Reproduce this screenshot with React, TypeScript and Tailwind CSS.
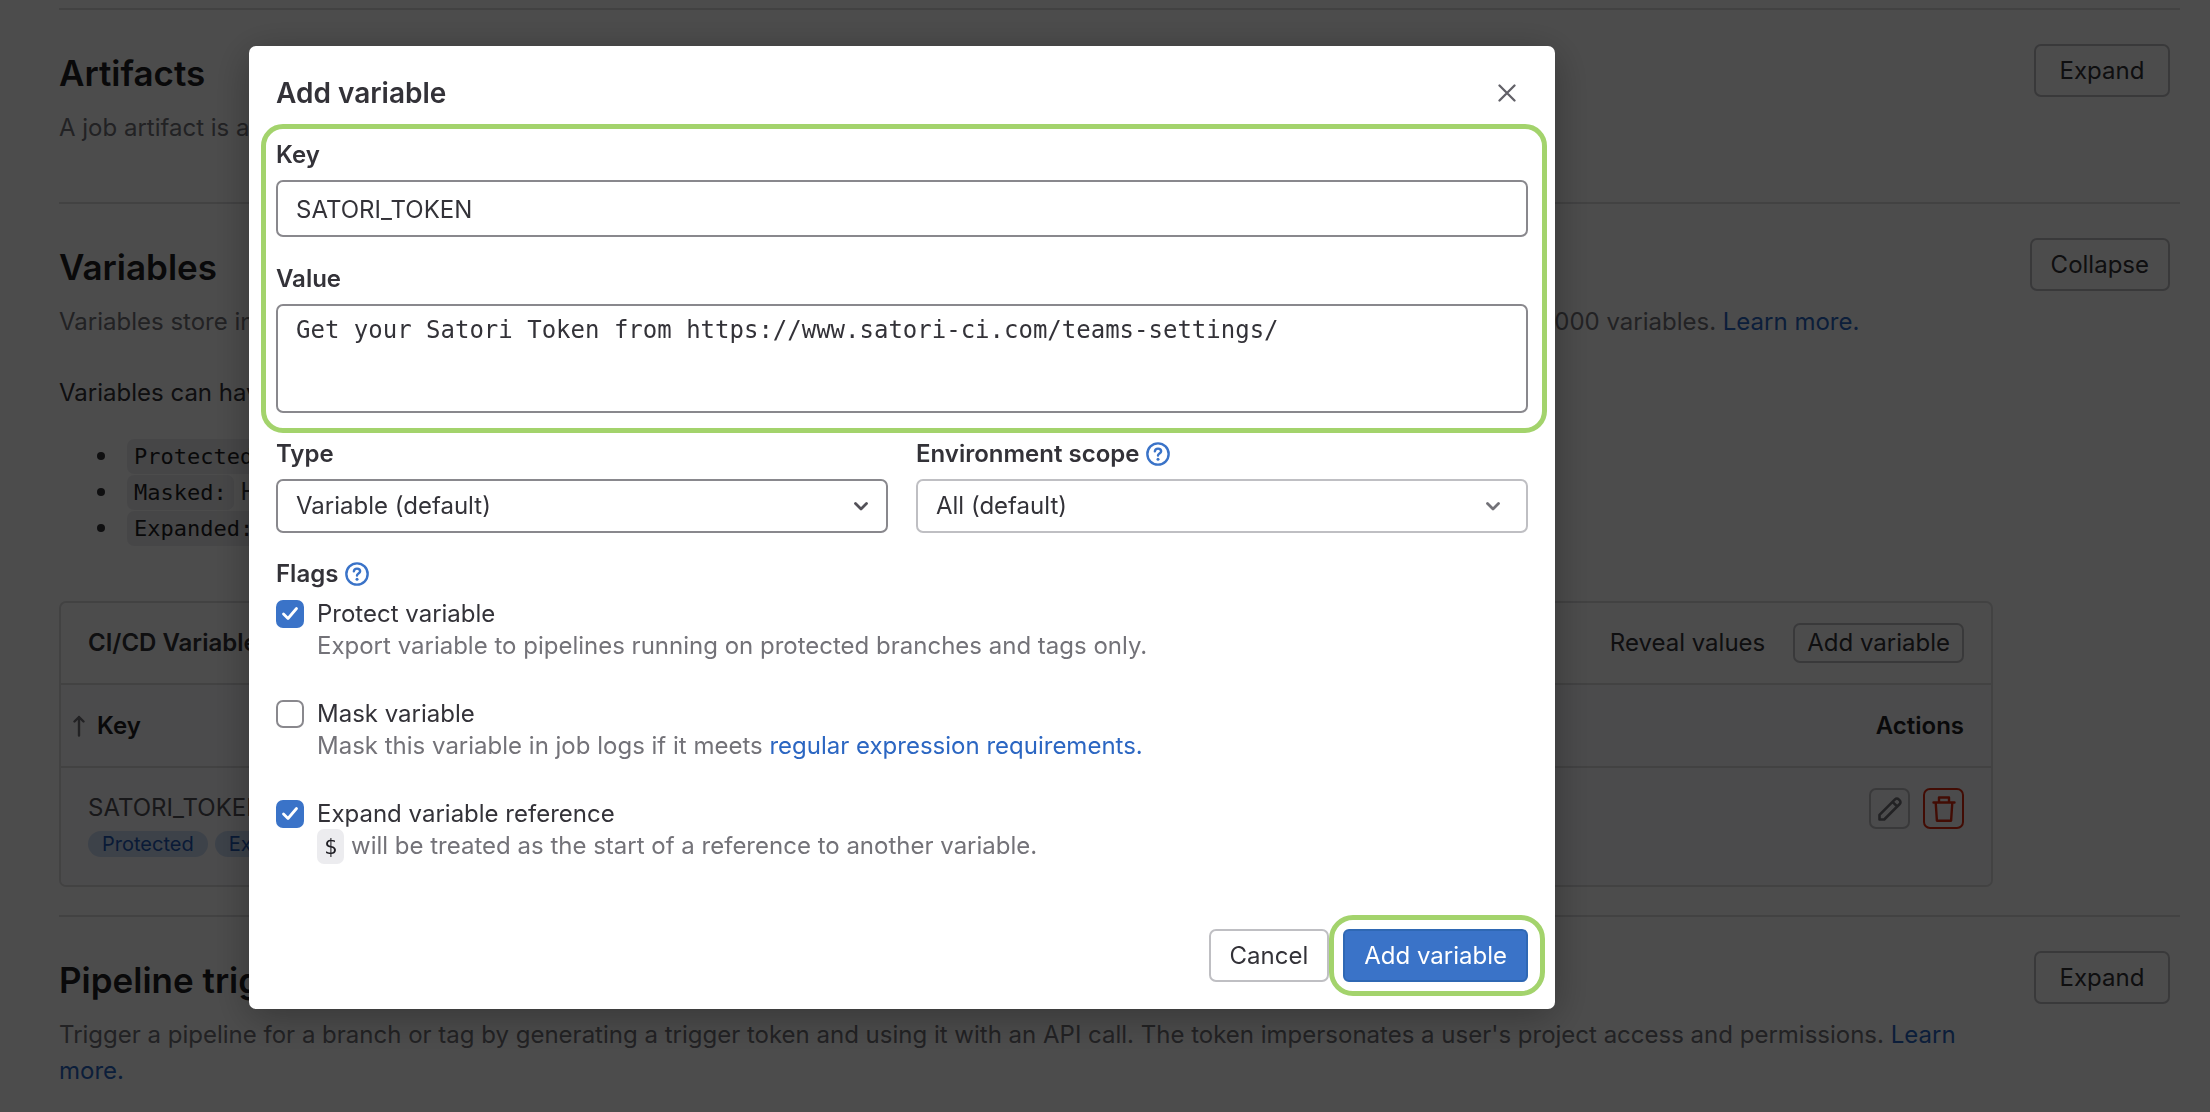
import React from "react";

const MONO_CODE = "rounded-[7px] bg-[#ececef] px-[7px] py-[5px] font-['DejaVu_Sans_Mono',monospace] text-[22px] leading-none text-[#1f1e24]";

function Help() {
  return (
    <svg viewBox="0 0 16 16" className="size-6 text-[#3a73c8]" fill="none" stroke="currentColor" strokeWidth="1.6" strokeLinecap="round" strokeLinejoin="round" aria-hidden="true">
      <circle cx="8" cy="8" r="7.1" />
      <path d="M5.900 6.200C6 5.100 6.900 4.400 8 4.400s2.100.700 2.100 1.800c0 1.500-2.100 1.500-2.100 2.800" />
      <circle cx="8" cy="11.500" r="1" fill="currentColor" stroke="none" />
    </svg>
  );
}

function Chevron({ className }: { className: string }) {
  return (
    <svg viewBox="0 0 24 24" className={`pointer-events-none absolute top-1/2 size-6 -translate-y-1/2 ${className}`} fill="none" stroke="currentColor" strokeWidth="2.800" strokeLinecap="round" strokeLinejoin="round" aria-hidden="true">
      <path d="m6.500 9.500 5.500 5.500 5.500-5.500" />
    </svg>
  );
}

function PageButton({ children }: { children: React.ReactNode }) {
  return (
    <button type="button" className="h-[53px] min-w-[136px] shrink-0 rounded-[7px] border-2 border-[#bfbfc3] bg-white px-[19px] leading-none">
      {children}
    </button>
  );
}

function Section({ title, action, children, className }: { title: string; action: string; children: React.ReactNode; className: string }) {
  return (
    <section className={`border-t-2 border-[#dcdcde] ${className}`}>
      <div className="flex items-start justify-between pr-[10px] pt-[34px]">
        <h2 className="pt-[7px] text-[35px] font-semibold leading-[44px] text-[#1f1e24]">{title}</h2>
        <PageButton>{action}</PageButton>
      </div>
      {children}
    </section>
  );
}

function Badge({ children }: { children: React.ReactNode }) {
  return <span className="rounded-full bg-[#cbdcf5] px-[14px] text-[20px] leading-[26px] text-[#2259b5]">{children}</span>;
}

function PageLink({ children }: { children: React.ReactNode }) {
  return (
    <a href="#" className="text-[#2b66c2]">
      {children}
    </a>
  );
}

function Attribute({ name, children }: { name: string; children: React.ReactNode }) {
  return (
    <li className="flex items-center">
      <span className="mr-[22px] size-2 rounded-full bg-[#333238]" aria-hidden="true" />
      <span>
        <code className={MONO_CODE}>{name}</code> {children}
      </span>
    </li>
  );
}

function Background() {
  return (
    <div className="pl-[59px] pr-[30px] pt-2">
      <Section title="Artifacts" action="Expand" className="h-[194px]">
        <p className="mt-[13px] text-[#737278]">A job artifact is an archive of files and directories.</p>
      </Section>
      <Section title="Variables" action="Collapse" className="h-[713px]">
        <p className="mt-[13px] max-w-[1934px] text-[#737278]">
          Variables store information, like passwords and secret keys, that you can use in job scripts. Each project can define a maximum of 8000 variables. <PageLink>Learn more.</PageLink>
        </p>
        <p className="mt-[35px]">Variables can have several attributes.</p>
        <ul className="mt-[27px] pl-[38px]">
          <Attribute name="Protected:">Only exposed to protected branches or protected tags.</Attribute>
          <Attribute name="Masked:">Hidden in job logs.</Attribute>
          <Attribute name="Expanded:">Variables with $ will be treated as a reference.</Attribute>
        </ul>
        <div className="mr-[187px] mt-[55px] overflow-hidden rounded-[7px] border-2 border-[#dcdcde]">
          <div className="flex h-20 items-center justify-between px-[27px]">
            <h3 className="font-semibold">CI/CD Variables</h3>
            <div className="flex items-center gap-[28px]">
              <button type="button">Reveal values</button>
              <button type="button" className="h-10 rounded-[7px] border-2 border-[#bfbfc3] bg-white px-[12px] leading-none">Add variable</button>
            </div>
          </div>
          <table className="w-full bg-[#fbfafd]">
            <thead>
              <tr className="h-[83px] border-t-2 border-[#dcdcde]">
                <th scope="col" className="pl-[12px] text-left font-semibold text-[#1f1e24]">
                  <span className="flex items-center gap-[12px]">
                    <svg viewBox="0 0 12 22" className="h-[22px] w-3 text-[#737278]" fill="none" stroke="currentColor" strokeWidth="2.400" strokeLinecap="round" strokeLinejoin="round" aria-hidden="true">
                      <path d="M6 20.500V2M1.500 6.500 6 2l4.500 4.500" />
                    </svg>
                    Key
                  </span>
                </th>
                <th scope="col" className="pr-[27px] text-right font-semibold text-[#1f1e24]">Actions</th>
              </tr>
            </thead>
            <tbody>
              <tr className="h-[118px] border-t-2 border-[#dcdcde] align-top">
                <td className="pl-[27px] pt-[22px] text-[#535158]">
                  <div>SATORI_TOKEN</div>
                  <div className="mt-[5px] flex gap-[7px]">
                    <Badge>Protected</Badge>
                    <Badge>Expanded</Badge>
                  </div>
                </td>
                <td className="pr-[27px] pt-[20px]">
                  <div className="flex justify-end gap-[13px]">
                    <button type="button" aria-label="Edit" className="flex size-[41px] items-center justify-center rounded-[7px] border-2 border-[#bfbfc3] text-[#737278]">
                      <svg viewBox="0 0 24 24" className="size-6" fill="none" stroke="currentColor" strokeWidth="2.600" strokeLinejoin="round" aria-hidden="true">
                        <path d="M1.500 22.500v-4.700L17 2.300a2.600 2.600 0 0 1 3.700 0l1 1a2.600 2.600 0 0 1 0 3.700L6.200 22.500zM14.500 4.800l4.700 4.700" />
                      </svg>
                    </button>
                    <button type="button" aria-label="Delete" className="flex size-[41px] items-center justify-center rounded-[7px] border-2 border-[#dd2b0e] text-[#dd2b0e]">
                      <svg viewBox="0 0 24 26" className="h-[26px] w-6" fill="none" stroke="currentColor" strokeWidth="2.400" strokeLinecap="round" strokeLinejoin="round" aria-hidden="true">
                        <path d="M1.500 6.500h21M7 6.500v-5h10v5M3.700 6.500l1.200 18.200h14.200l1.200-18.200" />
                      </svg>
                    </button>
                  </div>
                </td>
              </tr>
            </tbody>
          </table>
        </div>
      </Section>
      <Section title="Pipeline trigger tokens" action="Expand" className="">
        <p className="mt-[13px] max-w-[1934px] text-[#737278]">
          Trigger a pipeline for a branch or tag by generating a trigger token and using it with an API call. The token impersonates a user's project access and permissions. <PageLink>Learn more.</PageLink>
        </p>
      </Section>
    </div>
  );
}

function Flag({ id, label, checked, children }: { id: string; label: string; checked: boolean; children: React.ReactNode }) {
  return (
    <div className="flex h-[100px] gap-[13px]">
      <span className="relative size-7 shrink-0">
        <input id={id} type="checkbox" defaultChecked={checked} className="peer block size-7 appearance-none rounded-[7px] border-2 border-[#89888d] bg-white checked:border-0 checked:bg-[#3a73c8]" />
        <svg viewBox="0 0 28 28" className="pointer-events-none absolute inset-0 hidden size-7 text-white peer-checked:block" fill="none" stroke="currentColor" strokeWidth="2.800" strokeLinecap="round" strokeLinejoin="round" aria-hidden="true">
          <path d="m7.500 14 4.500 4.500 8.500-10" />
        </svg>
      </span>
      <div>
        <label htmlFor={id} className="block leading-[28px]">{label}</label>
        <p className="leading-9 text-[#737278]">{children}</p>
      </div>
    </div>
  );
}

function Modal() {
  return (
    <div role="dialog" aria-modal="true" aria-labelledby="modal-title" className="w-full max-w-[1306px] rounded-[7px] bg-white px-[27px] pb-[13px] pt-[29px] shadow-[0_8px_40px_rgba(0,0,0,0.3)]">
      <div className="flex items-center justify-between pb-[13px] pr-[9px]">
        <h1 id="modal-title" className="text-[28px] font-semibold leading-9">Add variable</h1>
        <button type="button" aria-label="Close" className="flex size-6 items-center justify-center text-[#626168]">
          <svg viewBox="0 0 18 18" className="size-[18px]" fill="none" stroke="currentColor" strokeWidth="2.300" strokeLinecap="round" aria-hidden="true">
            <path d="m1.500 1.500 15 15M16.500 1.500l-15 15" />
          </svg>
        </button>
      </div>

      <div className="-ml-[15px] -mr-[19px] rounded-[22px] border-[5px] border-[#a3d36c] pb-[15px] pl-[10px] pr-[14px] pt-[8px]">
        <label htmlFor="key" className="block font-semibold leading-9">Key</label>
        <input id="key" defaultValue="SATORI_TOKEN" className="mt-[7px] block h-[57px] w-full rounded-[7px] border-2 border-[#89888d] px-[18px] pt-[2px]" />
        <label htmlFor="value" className="mt-[24px] block font-semibold leading-9">Value</label>
        <textarea id="value" defaultValue="Get your Satori Token from https://www.satori-ci.com/teams-settings/" className="mt-[7px] block h-[109px] w-full resize-none rounded-[7px] border-2 border-[#89888d] px-[18px] py-[6px] font-['DejaVu_Sans_Mono',monospace] leading-9" />
      </div>

      <div className="mt-[3px] grid grid-cols-2 gap-[28px]">
        <div>
          <label htmlFor="type" className="block font-semibold leading-9">Type</label>
          <div className="relative mt-[7px]">
            <select id="type" className="block h-[54px] w-full appearance-none rounded-[7px] border-2 border-[#89888d] bg-white px-[18px]">
              <option>Variable (default)</option>
            </select>
            <Chevron className="right-[15px] text-[#535158]" />
          </div>
        </div>
        <div>
          <div className="flex items-center gap-[7px]">
            <label htmlFor="scope" className="font-semibold leading-9">Environment scope</label>
            <a href="#" aria-label="Environment scope help"><Help /></a>
          </div>
          <div className="relative mt-[7px]">
            <select id="scope" className="block h-[54px] w-full appearance-none rounded-[7px] border-2 border-[#bfbfc3] bg-white px-[18px]">
              <option>All (default)</option>
            </select>
            <Chevron className="right-[23px] text-[#737278]" />
          </div>
        </div>
      </div>

      <fieldset className="mt-[23px]">
        <legend className="flex items-center gap-[7px] font-semibold leading-9">
          Flags <a href="#" aria-label="Flags help"><Help /></a>
        </legend>
        <div className="mt-[8px]">
          <Flag id="protect" label="Protect variable" checked>Export variable to pipelines running on protected branches and tags only.</Flag>
          <Flag id="mask" label="Mask variable" checked={false}>
            Mask this variable in job logs if it meets <a href="#" className="text-[#2b66c2]">regular expression requirements.</a>
          </Flag>
          <Flag id="expand" label="Expand variable reference" checked>
            <code className={MONO_CODE}>$</code> will be treated as the start of a reference to another variable.
          </Flag>
        </div>
      </fieldset>

      <div className="-mr-[17px] mt-[15px] flex items-center justify-end">
        <button type="button" className="h-[53px] rounded-[7px] border-2 border-[#bfbfc3] bg-white px-[19px] leading-none">Cancel</button>
        <div className="rounded-[24px] border-[5px] border-[#a3d36c] py-[9px] pl-[9px] pr-[12px]">
          <button type="button" className="block h-[53px] rounded-[6px] border-2 border-[#2f68b4] bg-[#3a73c8] px-[19px] leading-none text-white">Add variable</button>
        </div>
      </div>
    </div>
  );
}

export default function App() {
  return (
    <div className="relative h-screen overflow-hidden bg-white font-['Inter',sans-serif] text-[24px] leading-9 text-[#333238]">
      <Background />
      <div className="fixed inset-0 overflow-hidden bg-black/70 pl-[249px] pt-[46px]">
        <Modal />
      </div>
    </div>
  );
}
